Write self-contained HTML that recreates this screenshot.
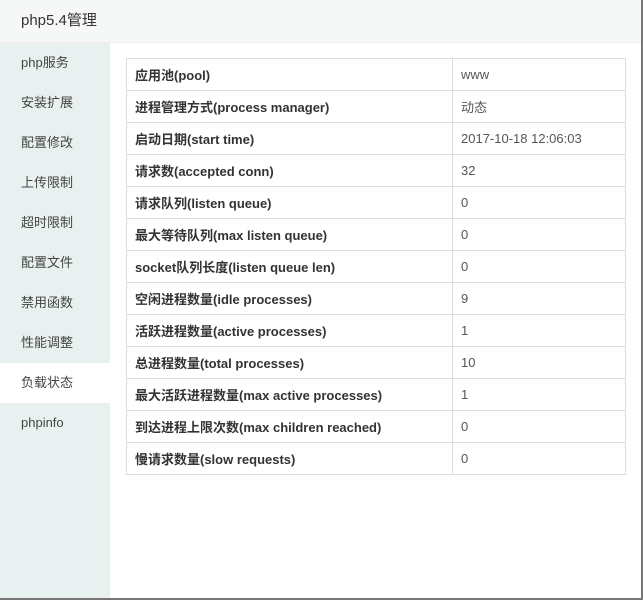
<!DOCTYPE html>
<html><head><meta charset="utf-8"><style>
body{margin:0;width:643px;height:600px;overflow:hidden;background:#fff;font-family:"Liberation Sans","Noto Sans CJK SC",sans-serif;position:relative}
.title{position:absolute;left:0;top:0;width:641px;height:42px;background:#f6f7f7;border-bottom:1px solid #eee;font-size:15px;color:#333;line-height:42px;text-indent:21px}
.side{position:absolute;left:0;top:43px;width:110px;height:557px;background:#e8f0f0}
.side div{height:40px;line-height:40px;padding-left:21px;font-size:13px;color:#444}
.side .a{background:#fff}
table{position:absolute;left:126px;top:58px;width:500px;border-collapse:collapse;font-size:13px}
td{border:1px solid #ddd;height:31px;padding:0 8px;color:#333}
td:first-child{width:309px;font-weight:bold}
td:last-child{color:#555}
.edge{position:absolute;right:0;top:0;width:2px;height:600px;background:#777}
.bot{position:absolute;left:0;bottom:0;width:643px;height:2px;background:#777}
</style></head><body>
<div class="title">php5.4管理</div>
<div class="side"><div>php服务</div><div>安装扩展</div><div>配置修改</div><div>上传限制</div><div>超时限制</div><div>配置文件</div><div>禁用函数</div><div>性能调整</div><div class="a">负载状态</div><div>phpinfo</div></div>
<table>
<tr><td>应用池(pool)</td><td>www</td></tr>
<tr><td>进程管理方式(process manager)</td><td>动态</td></tr>
<tr><td>启动日期(start time)</td><td>2017-10-18 12:06:03</td></tr>
<tr><td>请求数(accepted conn)</td><td>32</td></tr>
<tr><td>请求队列(listen queue)</td><td>0</td></tr>
<tr><td>最大等待队列(max listen queue)</td><td>0</td></tr>
<tr><td>socket队列长度(listen queue len)</td><td>0</td></tr>
<tr><td>空闲进程数量(idle processes)</td><td>9</td></tr>
<tr><td>活跃进程数量(active processes)</td><td>1</td></tr>
<tr><td>总进程数量(total processes)</td><td>10</td></tr>
<tr><td>最大活跃进程数量(max active processes)</td><td>1</td></tr>
<tr><td>到达进程上限次数(max children reached)</td><td>0</td></tr>
<tr><td>慢请求数量(slow requests)</td><td>0</td></tr>
</table>
<div class="edge"></div><div class="bot"></div>
</body></html>
